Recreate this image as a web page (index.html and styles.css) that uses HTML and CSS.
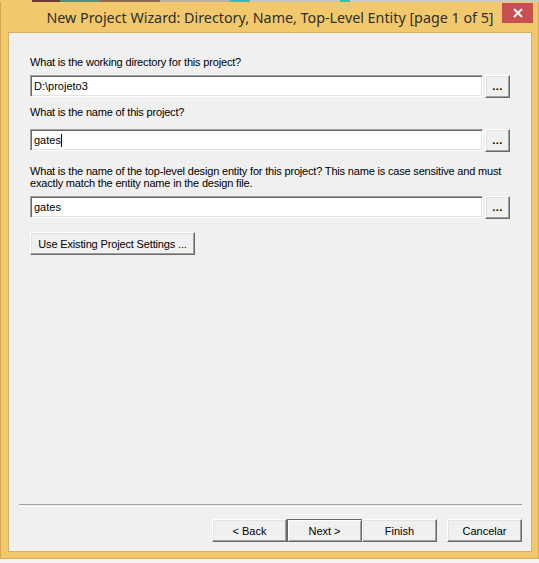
FILE: index.html
```html
<!DOCTYPE html>
<html>
<head>
<meta charset="utf-8">
<link rel="stylesheet" href="styles.css">
</head>
<body>
<div class="desk"></div>
<div class="window">
  <div class="titlebar">
    <span class="title">New Project Wizard: Directory, Name, Top-Level Entity [page 1 of 5]</span>
    <div class="close"><svg width="10" height="10" viewBox="0 0 10 10"><path d="M1 1L9 9M9 1L1 9" stroke="#fff" stroke-width="2"/></svg></div>
  </div>
  <div class="client">
    <div class="form">
      <div class="label l1">What is the working directory for this project?</div>
      <div class="row">
        <div class="input">D:\projeto3</div>
        <div class="btn dots">...</div>
      </div>
      <div class="label l2">What is the name of this project?</div>
      <div class="row">
        <div class="input">gates<span class="caret"></span></div>
        <div class="btn dots">...</div>
      </div>
      <div class="label l3">What is the name of the top-level design entity for this project? This name is case sensitive and must exactly match the entity name in the design file.</div>
      <div class="row">
        <div class="input">gates</div>
        <div class="btn dots">...</div>
      </div>
      <div class="btn existing">Use Existing Project Settings ...</div>
    </div>
    <div class="spacer"></div>
    <div class="sep"></div>
    <div class="buttons">
      <div class="btn nav">&lt; Back</div>
      <div class="btn nav default">Next &gt;</div>
      <div class="btn nav">Finish</div>
      <div class="btn nav cancel">Cancelar</div>
    </div>
  </div>
</div>
</body>
</html>
```
FILE: styles.css
```css
html, body {
  margin: 0;
  padding: 0;
  background: #f4f4f4;
}
body {
  width: 539px;
  height: 563px;
  overflow: hidden;
}
.desk {
  height: 2px;
  background: linear-gradient(to right, #f1c86c 0 32px, #6b3b32 32px 60px, #5d8c7a 60px 100px, #8a6a4a 100px 160px, #b9b0a0 160px 230px, #3fb7b0 230px 250px, #c9c4bc 250px 340px, #21c7c7 340px 350px, #cfcac2 350px 539px);
}
.window {
  box-sizing: border-box;
  width: 539px;
  height: 557px;
  background: #f1c86c;
  border: 1px solid #d6a955;
  border-top: none;
  padding: 0 6px 6px 7px;
  display: flex;
  flex-direction: column;
}
.titlebar {
  height: 30px;
  position: relative;
  display: flex;
  justify-content: center;
  align-items: center;
}
.title {
  font-family: "Noto Sans", "Open Sans", sans-serif;
  font-size: 14.3px;
  color: #2e2e2e;
  margin-left: 0;
}
.close {
  position: absolute;
  top: 1px;
  right: -1px;
  width: 31px;
  height: 20px;
  background: #c75050;
  display: flex;
  align-items: center;
  justify-content: center;
}
.client {
  flex: 1;
  background: #f0f0f0;
  border: 1px solid #d8af5c;
  display: flex;
  flex-direction: column;
  font-family: "Liberation Sans", Arial, sans-serif;
  font-size: 11px;
  color: #000;
}
.form {
  padding: 23px 21px 0 21px;
  display: flex;
  flex-direction: column;
  align-items: flex-start;
}
.label {
  line-height: 12px;
  letter-spacing: -0.18px;
}
.l1 { margin-bottom: 7px; }
.l2 { margin-top: 8px; margin-bottom: 11px; }
.l3 { margin-top: 13px; margin-bottom: 7px; }
.row {
  display: flex;
  align-items: flex-start;
  gap: 2px;
  align-self: stretch;
}
.input {
  flex: 1;
  box-sizing: border-box;
  height: 22px;
  background: #fff;
  border: 1px solid;
  border-color: #a0a0a0 #fff #fff #a0a0a0;
  box-shadow: inset 1px 1px #696969, inset -1px -1px #e3e3e3;
  padding: 0 3px;
  line-height: 19px;
  display: flex;
  align-items: center;
}
.caret {
  display: inline-block;
  width: 1px;
  height: 13px;
  background: #000;
}
.btn {
  box-sizing: border-box;
  height: 23px;
  background: #f0f0f0;
  border: 1px solid;
  border-color: #fff #696969 #696969 #fff;
  box-shadow: inset -1px -1px #a0a0a0, inset 1px 1px #e3e3e3;
  display: flex;
  align-items: center;
  justify-content: center;
  white-space: nowrap;
}
.dots {
  width: 25px;
  font-weight: bold;
  padding-bottom: 2px;
  letter-spacing: 0.5px;
}
.existing {
  margin-top: 13px;
  width: 165px;
  letter-spacing: -0.15px;
}
.spacer {
  flex: 1;
}
.sep {
  margin: 0 9px 0 10px;
  height: 1px;
  border-top: 1px solid #a0a0a0;
  border-bottom: 1px solid #fff;
}
.buttons {
  display: flex;
  justify-content: flex-end;
  padding: 12px 9px 9px 0;
}
.nav {
  width: 75px;
}
.default {
  border-color: #696969;
  box-shadow: inset 1px 1px #fff, inset -1px -1px #a0a0a0;
}
.cancel {
  margin-left: 10px;
}
```
